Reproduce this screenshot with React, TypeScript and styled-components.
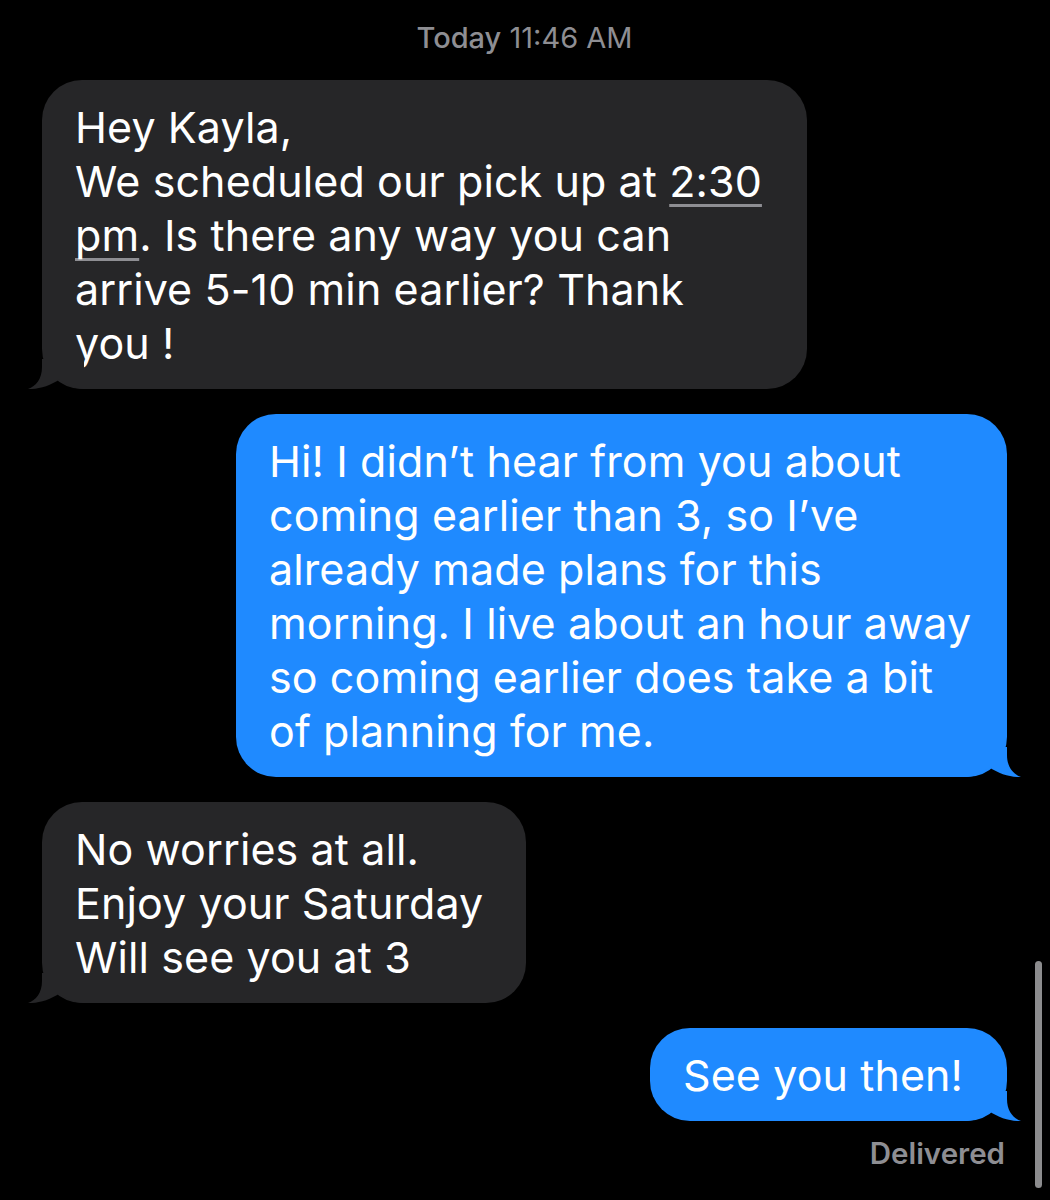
import React from 'react'
import styled, { createGlobalStyle } from 'styled-components'

const GlobalStyle = createGlobalStyle`
  html, body {
    margin: 0;
    padding: 0;
    background: #000;
  }
  body {
    font-family: Inter, "Noto Sans", "Liberation Sans", sans-serif;
    -webkit-font-smoothing: antialiased;
  }
`

const Screen = styled.div`
  width: 1050px;
  height: 1200px;
  background: #000;
  position: relative;
  overflow: hidden;
  box-sizing: border-box;
  padding: 21px 43px 0 42px;
  display: flex;
  flex-direction: column;
`

const Timestamp = styled.div`
  align-self: center;
  font-size: 29px;
  line-height: 34px;
  color: #8e8e93;
  margin-bottom: 25px;

  b {
    font-weight: 500;
  }
`

const Thread = styled.div`
  display: flex;
  flex-direction: column;
  gap: 25px;
`

const Bubble = styled.div<{ $mine?: boolean; $width: number }>`
  position: relative;
  align-self: ${p => (p.$mine ? 'flex-end' : 'flex-start')};
  width: ${p => p.$width}px;
  box-sizing: border-box;
  padding: 20px 0 19px 33px;
  border-radius: 40px;
  background: ${p => (p.$mine ? '#1f8aff' : '#262628')};
  color: #fff;
  font-size: 43px;
  line-height: 54px;
  letter-spacing: 0.1px;
`

const Line = styled.div`
  white-space: nowrap;
`

const Link = styled.span`
  text-decoration: underline;
  text-decoration-color: #8e8e93;
  text-decoration-thickness: 2.5px;
  text-underline-offset: 7px;
  text-decoration-skip-ink: none;
`

const TailSvg = styled.svg<{ $mine?: boolean }>`
  position: absolute;
  bottom: 0;
  width: 56px;
  height: 30px;
  ${p => (p.$mine ? 'right: -14px; transform: scaleX(-1);' : 'left: -14px;')}
`

const Status = styled.div`
  align-self: flex-end;
  margin-top: 15px;
  margin-right: 2px;
  font-size: 29.5px;
  line-height: 34px;
  font-weight: 600;
  color: #8e8e93;
`

const ScrollThumb = styled.div`
  position: absolute;
  right: 8px;
  top: 961px;
  width: 7px;
  height: 227px;
  border-radius: 4px;
  background: #8c8c8e;
`

const Tail: React.FC<{ mine?: boolean; color: string }> = ({ mine, color }) => (
  <TailSvg $mine={mine} viewBox="0 0 56 30">
    <path
      d="M14 0 L14 8 C14 20 8 27 0 30 C10 30.5 22 27 32 20 C38 26 46 30 56 30 L56 0 Z"
      fill={color}
    />
  </TailSvg>
)

interface Message {
  mine?: boolean
  width: number
  lines: React.ReactNode[]
}

const messages: Message[] = [
  {
    width: 765,
    lines: [
      'Hey Kayla,',
      <>
        We scheduled our pick up at <Link>2:30</Link>
      </>,
      <>
        <Link>pm</Link>. Is there any way you can
      </>,
      'arrive 5-10 min earlier? Thank',
      'you !'
    ]
  },
  {
    mine: true,
    width: 771,
    lines: [
      'Hi! I didn’t hear from you about',
      'coming earlier than 3, so I’ve',
      'already made plans for this',
      'morning. I live about an hour away',
      'so coming earlier does take a bit',
      'of planning for me.'
    ]
  },
  {
    width: 484,
    lines: ['No worries at all.', 'Enjoy your Saturday', 'Will see you at 3']
  },
  {
    mine: true,
    width: 357,
    lines: ['See you then!']
  }
]

const App: React.FC = () => {
  return (
    <>
      <GlobalStyle />
      <Screen>
        <Timestamp>
          <b>Today</b> 11:46 AM
        </Timestamp>
        <Thread>
          {messages.map((m, i) => (
            <Bubble key={i} $mine={m.mine} $width={m.width}>
              {m.lines.map((line, j) => (
                <Line key={j}>{line}</Line>
              ))}
              <Tail mine={m.mine} color={m.mine ? '#1f8aff' : '#262628'} />
            </Bubble>
          ))}
        </Thread>
        <Status>Delivered</Status>
        <ScrollThumb />
      </Screen>
    </>
  )
}

export default App
